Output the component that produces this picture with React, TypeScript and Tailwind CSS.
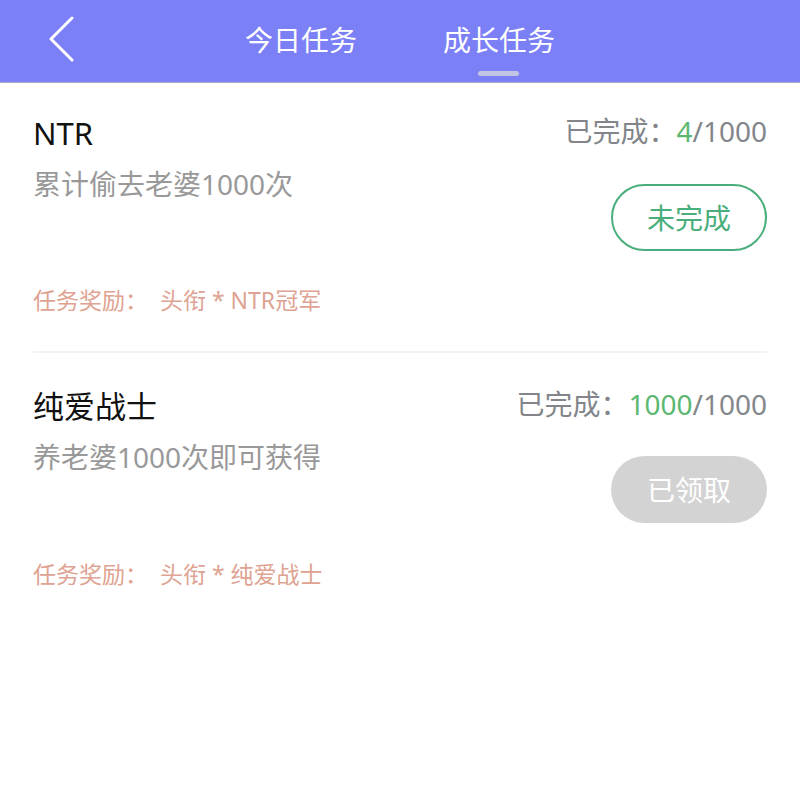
import React from "react";

const font = { fontFamily: '"Noto Sans", "Noto Sans CJK SC", sans-serif' };

function Item({
  title,
  desc,
  done,
  total,
  claimed,
  reward,
  titleMt,
  rightMt,
  btnMt,
  rewardMt,
}: {
  title: string;
  desc: string;
  done: number;
  total: number;
  claimed: boolean;
  reward: string;
  titleMt: number;
  rightMt: number;
  btnMt: number;
  rewardMt: number;
}) {
  return (
    <div className="flex flex-col">
      <div className="flex justify-between">
        <div className="flex flex-col">
          <div className="text-[31px] leading-[40px] text-[#111]" style={{ marginTop: titleMt }}>
            {title}
          </div>
          <div className="text-[28px] leading-[38px] text-[#999] mt-[12px]">{desc}</div>
        </div>
        <div className="flex flex-col items-end">
          <div className="text-[28px] leading-[38px] text-[#82868a]" style={{ marginTop: rightMt }}>
            已完成：<span className="text-[#5cb870]">{done}</span>/{total}
          </div>
          {claimed ? (
            <div
              className="w-[156px] h-[67px] rounded-full bg-[#d3d3d3] text-white text-[28px] flex items-center justify-center"
              style={{ marginTop: btnMt }}
            >
              已领取
            </div>
          ) : (
            <div
              className="w-[156px] h-[67px] rounded-full border-2 border-[#4aae7c] text-[#4aae7c] text-[28px] flex items-center justify-center"
              style={{ marginTop: btnMt }}
            >
              未完成
            </div>
          )}
        </div>
      </div>
      <div className="text-[23px] leading-[32px] text-[#dea392]" style={{ marginTop: rewardMt }}>
        任务奖励：&nbsp;&nbsp;头衔 * {reward}
      </div>
    </div>
  );
}

export default function App() {
  return (
    <div className="w-[800px] h-[800px] bg-white" style={font}>
      <div className="h-[83px] bg-[#7b80f6] border-b border-[#a9abc9] flex items-center relative">
        <svg className="absolute left-[48px] top-[16px]" width="28" height="46" viewBox="0 0 28 46">
          <path d="M24 2 L3 23 L24 44" fill="none" stroke="white" strokeWidth="3" strokeLinecap="round" strokeLinejoin="round" />
        </svg>
        <div className="flex w-full justify-center gap-[86px] text-white text-[28px] leading-none -mt-[2px]">
          <div>今日任务</div>
          <div className="relative">
            成长任务
            <div className="absolute left-[35px] top-[45px] w-[41px] h-[5px] rounded-full bg-[#c2c4e3]" />
          </div>
        </div>
      </div>
      <div className="px-[33px]">
        <Item
          title="NTR"
          desc="累计偷去老婆1000次"
          done={4}
          total={1000}
          claimed={false}
          reward="NTR冠军"
          titleMt={30}
          rightMt={29}
          btnMt={34}
          rewardMt={33}
        />
        <div className="h-[2px] bg-[#f3f3f3] mt-[35px]" />
        <Item
          title="纯爱战士"
          desc="养老婆1000次即可获得"
          done={1000}
          total={1000}
          claimed={true}
          reward="纯爱战士"
          titleMt={33}
          rightMt={32}
          btnMt={33}
          rewardMt={35}
        />
      </div>
    </div>
  );
}
